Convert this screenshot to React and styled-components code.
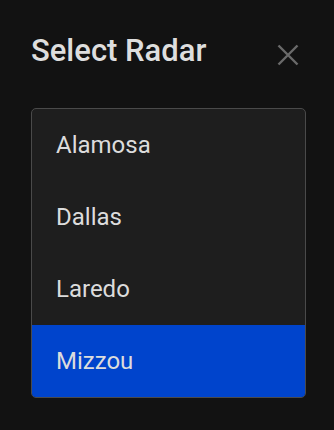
import React, { useState } from "react";
import styled, { createGlobalStyle } from "styled-components";

const GlobalStyle = createGlobalStyle`
  html, body {
    margin: 0;
    padding: 0;
    background: #121212;
  }
  body {
    font-family: Roboto, "Liberation Sans", sans-serif;
  }
`;

const Dialog = styled.div`
  width: 334px;
  height: 430px;
  box-sizing: border-box;
  padding: 32px 28px 0 31px;
  background: #121212;
`;

const Header = styled.div`
  display: flex;
  align-items: center;
  justify-content: space-between;
  height: 38px;
  margin-bottom: 38px;
`;

const Title = styled.h2`
  margin: 0;
  font-size: 31px;
  font-weight: 500;
  color: #dedede;
  line-height: 38px;
`;

const CloseButton = styled.button`
  display: flex;
  align-items: center;
  justify-content: center;
  width: 28px;
  height: 28px;
  padding: 0;
  margin-right: 4px;
  margin-top: 7px;
  border: none;
  background: none;
  color: #6a6a6a;
  cursor: pointer;
`;

const List = styled.ul`
  list-style: none;
  margin: 0;
  padding: 0;
  border: 1px solid #4a4a4a;
  border-radius: 5px;
  background: #1e1e1e;
  overflow: hidden;
`;

const Item = styled.li`
  height: 72px;
  display: flex;
  align-items: center;
  padding-left: 24px;
  font-size: 24px;
  color: #dcdcdc;
  background: ${(p) => (p.$selected ? "#0044cc" : "transparent")};
  cursor: pointer;
`;

const radars = ["Alamosa", "Dallas", "Laredo", "Mizzou"];

const App = () => {
  const [selected, setSelected] = useState("Mizzou");

  return (
    <>
      <GlobalStyle />
      <Dialog>
        <Header>
          <Title>Select Radar</Title>
          <CloseButton aria-label="close">
            <svg width="22" height="22" viewBox="0 0 22 22">
              <path d="M1.5 1.5 L20.5 20.5 M20.5 1.5 L1.5 20.5" stroke="currentColor" strokeWidth="2.4" />
            </svg>
          </CloseButton>
        </Header>
        <List>
          {radars.map((r) => (
            <Item key={r} $selected={r === selected} onClick={() => setSelected(r)}>
              {r}
            </Item>
          ))}
        </List>
      </Dialog>
    </>
  );
};

export default App;
